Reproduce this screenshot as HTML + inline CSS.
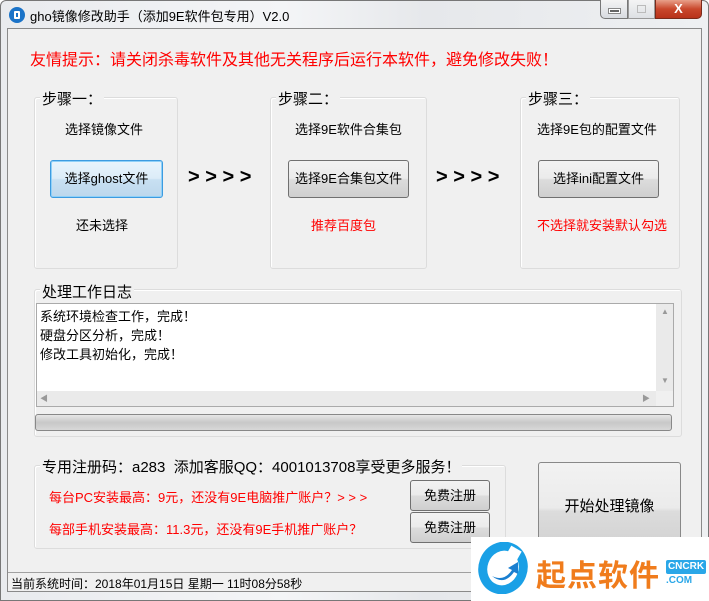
<!DOCTYPE html><html><head><meta charset="utf-8"><style>
*{margin:0;padding:0;box-sizing:border-box}
body{width:709px;height:601px;overflow:hidden;background:#fff;font-family:"Liberation Sans","Noto Sans CJK SC",sans-serif;font-size:13px;color:#000;position:relative}
.a{position:absolute}
.win{left:0;top:0;width:709px;height:601px;background:linear-gradient(90deg,#e9ebee,#f4f5f7 40%,#e6e8eb 60%,#eef0f2);border:1px solid #777;border-radius:6px 6px 0 0}
.client{left:7px;top:28px;width:695px;height:564px;background:#f0f0f0;border:1px solid #8a8a8a}
.grp{border:1px solid #dcdcdc;border-radius:3px;box-shadow:inset 1px 1px 0 #fff}
.lbl{background:#f0f0f0;font-size:15px;padding:0 2px;white-space:nowrap}
.btn{border:1px solid #707070;border-radius:3px;background:linear-gradient(#f2f2f2,#ebebeb 48%,#dcdcdc 52%,#cfcfcf);text-align:center;font-size:13px}
.t{white-space:nowrap}
.red{color:#f00}
</style></head><body>
<div class="a win"></div>
<div class="a" style="left:9px;top:7px;width:16px;height:16px;border-radius:50%;background:#1a73c8"></div>
<div class="a" style="left:14px;top:11px;width:6px;height:8px;border:2px solid #fff;border-radius:1px"></div>
<div class="a t" style="left:30px;top:6px;font-size:13px">gho镜像修改助手（添加9E软件包专用）V2.0</div>
<div class="a" style="left:600px;top:0;width:28px;height:19px;border:1px solid #777;border-top:none;border-radius:0 0 0 5px;background:linear-gradient(#f4f4f4,#d8dbe0)"></div>
<div class="a" style="left:609px;top:9px;width:11px;height:4px;background:#666;border:1px solid #fff;box-shadow:0 0 0 1px #888"></div>
<div class="a" style="left:628px;top:0;width:27px;height:19px;border:1px solid #999;border-top:none;background:linear-gradient(#f4f4f4,#dde0e4)"></div>
<div class="a" style="left:637px;top:5px;width:9px;height:8px;border:1px solid #bbb"></div>
<div class="a" style="left:655px;top:0;width:47px;height:19px;border:1px solid #7a2a1a;border-top:none;border-radius:0 0 5px 0;background:linear-gradient(#e8a08a,#c9472c 50%,#b8321a);color:#fff;font-weight:bold;text-align:center;font-size:13px;line-height:17px">X</div>
<div class="a client"></div>
<div class="a t red" style="left:30px;top:46px;font-size:16px">友情提示：请关闭杀毒软件及其他无关程序后运行本软件，避免修改失败！</div>

<div class="a grp" style="left:34px;top:97px;width:144px;height:172px"></div>
<div class="a lbl" style="left:40px;top:88px">步骤一：</div>
<div class="a t" style="left:65px;top:119px">选择镜像文件</div>
<div class="a btn" style="left:50px;top:160px;width:113px;height:38px;line-height:36px;border-color:#3c9be0;background:linear-gradient(#e8f4fc,#dcecf8 48%,#c8e0f2 52%,#bcd7ec);box-shadow:0 0 0 1px #8fd0f8 inset">选择ghost文件</div>
<div class="a t" style="left:76px;top:215px">还未选择</div>
<div class="a t" style="left:188px;top:166px;font-size:20px;font-weight:bold">&gt; &gt; &gt; &gt;</div>

<div class="a grp" style="left:270px;top:97px;width:157px;height:172px"></div>
<div class="a lbl" style="left:276px;top:88px">步骤二：</div>
<div class="a t" style="left:295px;top:119px">选择9E软件合集包</div>
<div class="a btn" style="left:288px;top:160px;width:121px;height:38px;line-height:36px">选择9E合集包文件</div>
<div class="a t red" style="left:311px;top:215px">推荐百度包</div>
<div class="a t" style="left:436px;top:166px;font-size:20px;font-weight:bold">&gt; &gt; &gt; &gt;</div>

<div class="a grp" style="left:520px;top:97px;width:160px;height:172px"></div>
<div class="a lbl" style="left:526px;top:88px">步骤三：</div>
<div class="a t" style="left:537px;top:119px">选择9E包的配置文件</div>
<div class="a btn" style="left:538px;top:160px;width:121px;height:38px;line-height:36px">选择ini配置文件</div>
<div class="a t red" style="left:537px;top:215px">不选择就安装默认勾选</div>

<div class="a grp" style="left:34px;top:289px;width:648px;height:148px"></div>
<div class="a lbl" style="left:40px;top:281px">处理工作日志</div>
<div class="a" style="left:36px;top:303px;width:638px;height:104px;border:1px solid #aaa;background:#fff"></div>
<div class="a" style="left:656px;top:304px;width:17px;height:87px;background:#eaeaea"></div>
<div class="a" style="left:37px;top:391px;width:619px;height:15px;background:#eaeaea"></div>
<div class="a" style="left:656px;top:391px;width:17px;height:15px;background:#f0f0f0"></div>
<div class="a t" style="left:661px;top:307px;font-size:8px;color:#999">▲</div>
<div class="a t" style="left:661px;top:376px;font-size:8px;color:#999">▼</div>
<div class="a t" style="left:40px;top:393px;font-size:8px;color:#999">◀</div>
<div class="a t" style="left:642px;top:393px;font-size:8px;color:#999">▶</div>
<div class="a" style="left:40px;top:307px;line-height:19px">系统环境检查工作，完成！<br>硬盘分区分析，完成！<br>修改工具初始化，完成！</div>
<div class="a" style="left:35px;top:414px;width:637px;height:17px;border:1px solid #888;border-radius:3px;background:linear-gradient(#e6e6e6,#c8c8c8 50%,#d8d8d8)"></div>

<div class="a grp" style="left:34px;top:465px;width:472px;height:84px"></div>
<div class="a lbl" style="left:40px;top:456px;font-size:15px">专用注册码：a283&nbsp; 添加客服QQ：4001013708享受更多服务！</div>
<div class="a t red" style="left:49px;top:487px">每台PC安装最高：9元，还没有9E电脑推广账户？&gt; &gt; &gt;</div>
<div class="a t red" style="left:49px;top:519px">每部手机安装最高：11.3元，还没有9E手机推广账户？</div>
<div class="a btn" style="left:410px;top:480px;width:80px;height:31px;line-height:29px">免费注册</div>
<div class="a btn" style="left:410px;top:512px;width:80px;height:31px;line-height:29px">免费注册</div>
<div class="a btn" style="left:538px;top:462px;width:143px;height:95px;line-height:88px;font-size:15px;border-color:#888">开始处理镜像</div>

<div class="a" style="left:8px;top:572px;width:693px;height:1px;background:#a0a0a0"></div>
<div class="a t" style="left:11px;top:575px;font-size:12px">当前系统时间：2018年01月15日 星期一 11时08分58秒</div>

<div class="a" style="left:471px;top:537px;width:238px;height:64px;background:#fff"></div>
<svg class="a" style="left:478px;top:542px" width="50" height="52" viewBox="0 0 50 52">
<ellipse cx="25" cy="26" rx="20" ry="22" fill="none" stroke="#1aa0e6" stroke-width="9" transform="rotate(20 25 26)"/>
<path d="M14 34 Q26 40 34 28 L30 26 L40 20 L40 32 L36 30 Q26 44 14 34Z" fill="#1a7fd0"/>
<rect x="30" y="6" width="12" height="10" fill="#fff" transform="rotate(30 36 11)"/>
</svg>
<div class="a t" style="left:536px;top:551px;font-size:30px;font-weight:bold;color:#f07c1c;letter-spacing:1px">起点软件</div>
<div class="a t" style="left:666px;top:560px;width:40px;height:14px;background:#2aa7e8;color:#fff;font-size:10px;font-weight:bold;text-align:center;line-height:14px;border-radius:2px">CNCRK</div>
<div class="a t" style="left:666px;top:575px;font-size:10px;font-weight:bold;color:#2aa7e8">.COM</div>
</body></html>
